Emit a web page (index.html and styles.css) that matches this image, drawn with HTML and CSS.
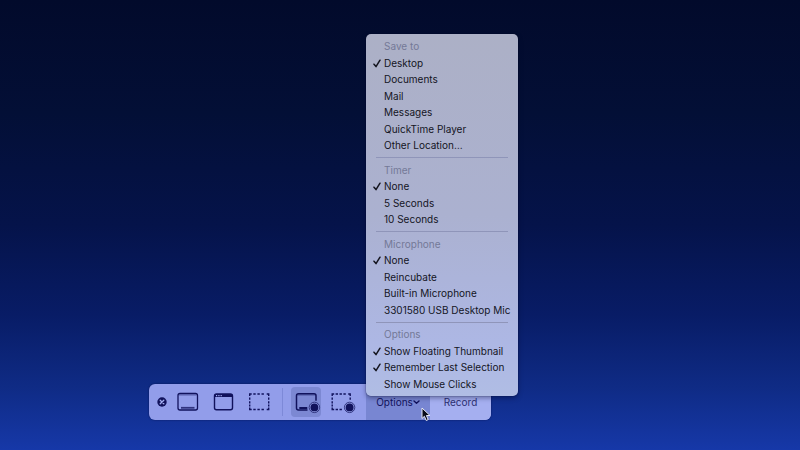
FILE: index.html
```html
<!DOCTYPE html>
<html lang="en">
<head>
<meta charset="utf-8">
<title>Screen capture</title>
<link rel="stylesheet" href="styles.css">
</head>
<body>
<svg class="defs" aria-hidden="true">
  <symbol id="check" viewBox="0 0 8 9"><path d="M1 5.2 3 7.6 7 1.2" fill="none" stroke="currentColor" stroke-width="1.5" stroke-linecap="round" stroke-linejoin="round"/></symbol>
</svg>
<main class="desktop">
  <div class="toolbar" role="toolbar" aria-label="Screen capture">
    <div class="tools">
      <button class="close" type="button" aria-label="Close">
        <svg viewBox="0 0 10 10"><circle cx="5" cy="5" r="4.7" fill="currentColor"/><path d="M3.2 3.2 6.8 6.8M6.8 3.2 3.2 6.8" stroke="#a3adf2" stroke-width="1.3" stroke-linecap="round"/></svg>
      </button>
      <button class="tool" type="button" aria-label="Capture entire screen">
        <svg viewBox="0 0 30 30"><rect x="5" y="6.5" width="19.5" height="16.5" rx="2" fill="none" stroke="currentColor" stroke-width="1.3"/><path d="M6 8h17.5" stroke="currentColor" opacity=".45"/><path d="M8 20.8h13.5" stroke="currentColor" stroke-width="1.8" opacity=".75"/></svg>
      </button>
      <button class="tool" type="button" aria-label="Capture selected window">
        <svg viewBox="0 0 30 30"><rect x="5.5" y="7" width="18" height="15.8" rx="2" fill="none" stroke="currentColor" stroke-width="1.4"/><path d="M5.5 10V9a2 2 0 0 1 2-2h14a2 2 0 0 1 2 2v1z" fill="currentColor"/><path d="M7 8.6h1.2M9.3 8.6h1.2M11.6 8.6h1.2" stroke="#a3adf2" stroke-width="1.1"/></svg>
      </button>
      <button class="tool" type="button" aria-label="Capture selected portion">
        <svg viewBox="0 0 30 30"><path d="M4.700 9V7h2M21.700 7h2v2M23.700 20.500v2h-2M6.700 22.500h-2v-2M8.300 7h2.400M12.400 7h2.400M16.500 7h2.400M8.300 22.500h2.400M12.400 22.500h2.400M16.500 22.500h2.400M4.700 10.600v2.200M4.700 14.200v2.200M4.700 17.600v2M23.700 10.600v2.200M23.700 14.200v2.200M23.700 17.600v2" fill="none" stroke="currentColor" stroke-width="1.4"/></svg>
      </button>
      <span class="divider"></span>
      <button class="tool selected" type="button" aria-label="Record entire screen" aria-pressed="true">
        <svg viewBox="0 0 30 30"><path d="M16.5 23h-9a2 2 0 0 1-2-2V8.8a2 2 0 0 1 2-2H23a2 2 0 0 1 2 2v5" fill="none" stroke="currentColor" stroke-width="1.5"/><path d="M6.5 8H24" stroke="currentColor" opacity=".45"/><path d="M8.3 21h8" stroke="currentColor" stroke-width="2"/><circle cx="23.4" cy="20.4" r="5.2" fill="#8f9be5" stroke="currentColor" stroke-width=".7"/><circle cx="23.4" cy="20.4" r="3.9" fill="currentColor"/></svg>
      </button>
      <button class="tool" type="button" aria-label="Record selected portion">
        <svg viewBox="0 0 30 30"><path d="M5.2 9V7h2M21.2 7h2v2M7.2 22.5h-2v-2M8.6 7H11M12.5 7h2.4M16.4 7h2.4M8.600 22.500H11M12.500 22.500h2.400M5.200 10.600v2.200M5.200 14.200v2.200M5.200 17.600v2M23.200 10.600v2.200" fill="none" stroke="currentColor" stroke-width="1.4"/><circle cx="22.6" cy="20.4" r="5.2" fill="#8f9be5" stroke="currentColor" stroke-width=".7"/><circle cx="22.6" cy="20.4" r="3.9" fill="currentColor"/></svg>
      </button>
    </div>
    <div class="options">
      <button class="action open" type="button" aria-haspopup="menu" aria-expanded="true">Options<svg class="chevron" viewBox="0 0 7 6"><path d="M1 2l2.500 2.200L6 2" fill="none" stroke="currentColor" stroke-width="1.4" stroke-linecap="round" stroke-linejoin="round"/></svg></button>
      <div class="menu" role="menu" aria-label="Options">
        <div class="group" role="group" aria-labelledby="save">
          <div class="heading" id="save">Save to</div>
          <button class="item" type="button" role="menuitemradio" aria-checked="true"><svg class="check"><use href="#check"/></svg>Desktop</button>
          <button class="item" type="button" role="menuitemradio" aria-checked="false">Documents</button>
          <button class="item" type="button" role="menuitemradio" aria-checked="false">Mail</button>
          <button class="item" type="button" role="menuitemradio" aria-checked="false">Messages</button>
          <button class="item" type="button" role="menuitemradio" aria-checked="false">QuickTime Player</button>
          <button class="item" type="button" role="menuitemradio" aria-checked="false">Other Location…</button>
        </div>
        <div class="separator" role="separator"></div>
        <div class="group" role="group" aria-labelledby="timer">
          <div class="heading" id="timer">Timer</div>
          <button class="item" type="button" role="menuitemradio" aria-checked="true"><svg class="check"><use href="#check"/></svg>None</button>
          <button class="item" type="button" role="menuitemradio" aria-checked="false">5 Seconds</button>
          <button class="item" type="button" role="menuitemradio" aria-checked="false">10 Seconds</button>
        </div>
        <div class="separator" role="separator"></div>
        <div class="group" role="group" aria-labelledby="mic">
          <div class="heading" id="mic">Microphone</div>
          <button class="item" type="button" role="menuitemradio" aria-checked="true"><svg class="check"><use href="#check"/></svg>None</button>
          <button class="item" type="button" role="menuitemradio" aria-checked="false">Reincubate</button>
          <button class="item" type="button" role="menuitemradio" aria-checked="false">Built-in Microphone</button>
          <button class="item" type="button" role="menuitemradio" aria-checked="false">3301580 USB Desktop Mic</button>
        </div>
        <div class="separator" role="separator"></div>
        <div class="group" role="group" aria-labelledby="opts">
          <div class="heading" id="opts">Options</div>
          <button class="item" type="button" role="menuitemcheckbox" aria-checked="true"><svg class="check"><use href="#check"/></svg>Show Floating Thumbnail</button>
          <button class="item" type="button" role="menuitemcheckbox" aria-checked="true"><svg class="check"><use href="#check"/></svg>Remember Last Selection</button>
          <button class="item" type="button" role="menuitemcheckbox" aria-checked="false">Show Mouse Clicks</button>
        </div>
      </div>
      <svg class="cursor" viewBox="0 0 10 15" aria-hidden="true"><path d="M1 1v10.500l2.400-2.200 1.800 4.200 2-.9-1.800-4.100H9z" fill="#080a18" stroke="#e6e8f6" stroke-width="1" stroke-linejoin="round"/></svg>
    </div>
    <button class="action record" type="button">Record</button>
  </div>
</main>
</body>
</html>
```
FILE: styles.css
```css
* {
  box-sizing: border-box;
}

body {
  margin: 0;
  font-family: Inter, "Liberation Sans", sans-serif;
  font-size: 10px;
  line-height: 1.65;
}

button {
  margin: 0;
  padding: 0;
  border: 0;
  background: none;
  color: inherit;
  font: inherit;
}

svg {
  display: block;
}

.defs {
  position: absolute;
  width: 0;
  height: 0;
}

.desktop {
  display: flex;
  align-items: flex-end;
  min-height: 100vh;
  padding: 0 0 30px 149px;
  background: linear-gradient(#020a2b 0%, #030f36 25%, #05134a 50%, #081c66 70%, #0f2b85 86%, #1638a8 100%);
}

.toolbar {
  display: flex;
  height: 36px;
  border-radius: 6px;
  background: #929dea;
  color: #11125c;
  box-shadow: 0 0 2px rgba(0, 5, 50, 0.6);
}

.tools {
  display: flex;
  align-items: center;
  gap: 6px;
  padding: 0 9px 0 8px;
}

.close {
  width: 10px;
  height: 10px;
}

.tool {
  width: 30px;
  height: 30px;
  border-radius: 4px;
}

.selected {
  background: #7c88d3;
}

.divider {
  width: 1px;
  height: 28px;
  margin: 0 2px 0 1px;
  background: #7d89d8;
}

.options {
  position: relative;
  display: flex;
}

.action {
  display: flex;
  align-items: center;
  justify-content: center;
  width: 64px;
}

.open {
  background: #7886d2;
}

.record {
  width: 61px;
  border-radius: 0 6px 6px 0;
  background: #a5aff0;
  color: #2c2f72;
}

.chevron {
  width: 7px;
  height: 6px;
}

.menu {
  position: absolute;
  bottom: 24px;
  left: 0;
  width: 152px;
  padding: 4px 0;
  border-radius: 5px;
  background: linear-gradient(#acb0c6, #abb1d0 50%, #adb7e4 85%, #b0bde4);
  color: #14151f;
  box-shadow: 0 0 1px #00051f, 0 2px 5px rgba(0, 5, 40, 0.4);
}

.heading,
.item {
  display: block;
  width: 100%;
  padding-left: 18px;
  text-align: left;
  white-space: nowrap;
}

.heading {
  color: #747997;
}

.item {
  position: relative;
}

.check {
  position: absolute;
  top: 4px;
  left: 7px;
  width: 8px;
  height: 9px;
}

.separator {
  display: flex;
  align-items: center;
  height: 8px;
  padding: 0 10px;
}

.separator::before {
  content: "";
  flex: 1;
  height: 1px;
  background: #8f95b9;
}

.cursor {
  position: absolute;
  top: 23px;
  left: 55px;
  width: 10px;
  height: 15px;
}
```
